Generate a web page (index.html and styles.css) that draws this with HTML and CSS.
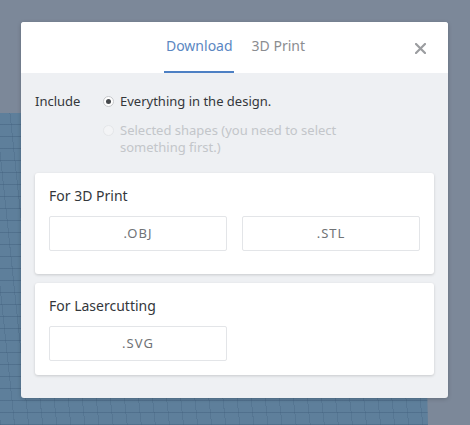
FILE: index.html
```html
<html>
<head>
    <meta charset="utf-8">
    <link rel="stylesheet" href="styles.css">
</head>
<body>
    <div class="backdrop"></div>

    <div class="dlgModal">
        <div class="dlgHead">
            <div></div>
            <div class="tabBar">
                <div class="tabItem tabActive">Download</div>
                <div class="tabItem">3D Print</div>
            </div>
            <div class="closeBtn">
                <svg width="11" height="11" viewBox="0 0 11 11">
                    <path d="M1 1 L10 10 M10 1 L1 10" stroke="#9b9da0" stroke-width="2.2" stroke-linecap="round"/>
                </svg>
            </div>
        </div>

        <div class="dlgBody">
            <div class="incRow">
                <div class="incLabel">Include</div>
                <div class="incOpts">
                    <div class="optLine">
                        <span class="radio radioOn"></span>
                        <span>Everything in the design.</span>
                    </div>
                    <div class="optLine optOff">
                        <span class="radio"></span>
                        <span>Selected shapes (you need to select<br>something first.)</span>
                    </div>
                </div>
            </div>

            <div class="expCard">
                <div class="cardTtl">For 3D Print</div>
                <div class="btnGrid">
                    <div class="fmtBtn">.OBJ</div>
                    <div class="fmtBtn">.STL</div>
                </div>
            </div>

            <div class="expCard cardLast">
                <div class="cardTtl">For Lasercutting</div>
                <div class="btnGrid">
                    <div class="fmtBtn">.SVG</div>
                </div>
            </div>
        </div>
    </div>
</body>
</html>
```

FILE: styles.css
```css
body {
    margin: 0;
    width: 470px;
    height: 425px;
    overflow: hidden;
    position: relative;
    background-color: #7c8899;
    font-family: "Noto Sans", "Open Sans", sans-serif;
    color: #34373b;
}

/* workplane grid behind the dialog */
.backdrop {
    position: absolute;
    left: 0;
    top: 0;
    width: 470px;
    height: 425px;
    background-color: #5e7f9b;
    background-image:
        repeating-linear-gradient(0deg, rgba(60, 90, 120, 0.4) 0px, rgba(60, 90, 120, 0.4) 1px, transparent 1px, transparent 12px),
        repeating-linear-gradient(84deg, rgba(60, 90, 120, 0.25) 0px, rgba(60, 90, 120, 0.25) 1px, transparent 1px, transparent 14px);
    clip-path: polygon(0 113px, 420px 113px, 428px 425px, 0 425px);
}

.dlgModal {
    position: relative;
    z-index: 1;
    margin: 22px 0 0 21px;
    width: 427px;
    border-radius: 3px;
    overflow: hidden;
    background-color: #eef0f3;
    box-shadow: 0 1px 4px rgba(0, 0, 0, 0.2);
}

.dlgHead {
    height: 51px;
    background-color: #ffffff;
    display: grid;
    grid-template-columns: 1fr auto 1fr;
}

.tabBar {
    display: flex;
    gap: 18px;
}

.tabItem {
    box-sizing: border-box;
    height: 51px;
    padding-top: 14px;
    line-height: 20px;
    font-size: 14px;
    color: #8b8d90;
    border-bottom: 2px solid transparent;
}

.tabActive {
    color: #5b87c2;
    border-bottom-color: #4d80c4;
    padding-left: 2px;
    padding-right: 1px;
}

.closeBtn {
    justify-self: end;
    padding: 21px 22px 0 0;
    line-height: 0;
}

.dlgBody {
    padding: 20px 14px 23px 14px;
    font-size: 13px;
}

.incRow {
    display: flex;
    line-height: 17px;
}

.incLabel {
    width: 68px;
}

.incOpts {
    display: flex;
    flex-direction: column;
    gap: 12px;
}

.optLine {
    display: flex;
    align-items: flex-start;
    gap: 6px;
}

.optOff {
    color: #c3c6ca;
}

.radio {
    box-sizing: border-box;
    width: 11px;
    height: 11px;
    margin-top: 3px;
    border: 1px solid #c6c8cb;
    border-radius: 50%;
    background-color: #ffffff;
    position: relative;
    flex: none;
}

.radioOn::after {
    content: "";
    position: absolute;
    left: 2px;
    top: 2px;
    width: 5px;
    height: 5px;
    border-radius: 50%;
    background-color: #46494d;
}

.optOff .radio {
    border-color: #e4e6e9;
    background-color: #f3f4f6;
}

.expCard {
    margin-top: 17px;
    padding: 13px 14px 23px 14px;
    background-color: #ffffff;
    border-radius: 3px;
    box-shadow: 0 1px 3px rgba(0, 0, 0, 0.16);
}

.expCard + .expCard {
    margin-top: 9px;
}

.cardLast {
    padding-bottom: 14px;
}

.cardTtl {
    font-size: 14px;
    line-height: 20px;
    color: #34373b;
}

.btnGrid {
    margin-top: 10px;
    display: grid;
    grid-template-columns: 178px 178px;
    gap: 15px;
}

.fmtBtn {
    box-sizing: border-box;
    height: 35px;
    line-height: 33px;
    text-align: center;
    border: 1px solid #e3e5e8;
    border-radius: 2px;
    color: #707376;
    font-size: 13px;
    letter-spacing: 1px;
}
```
